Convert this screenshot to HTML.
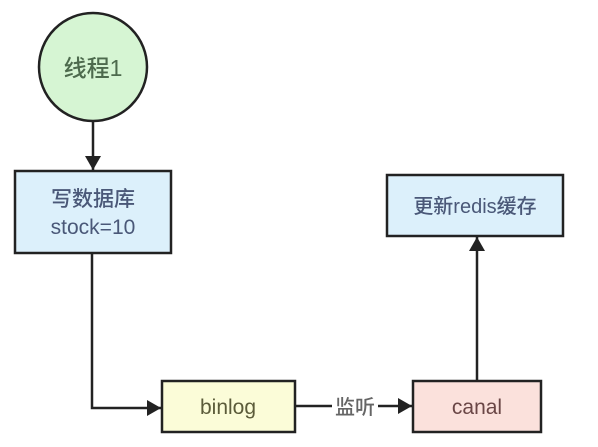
<!DOCTYPE html>
<html><head><meta charset="utf-8"><style>
html,body{margin:0;padding:0;background:#fff;width:598px;height:447px;overflow:hidden}
text{font-family:"Liberation Sans","Noto Sans CJK SC",sans-serif;font-weight:500}
</style></head><body>
<svg width="598" height="447" viewBox="0 0 598 447" xmlns="http://www.w3.org/2000/svg">
<defs>
<marker id="b" markerWidth="14" markerHeight="16" refX="14" refY="8" orient="auto" markerUnits="userSpaceOnUse">
<path d="M0,0 L14,8 L0,16 z" fill="#222"/></marker>
</defs>
<circle cx="93" cy="67" r="54" fill="#d6f5d3" stroke="#222" stroke-width="2.5"/>
<text x="93" y="76" font-size="23" text-anchor="middle" fill="#4d6a4d">线程1</text>
<line x1="93" y1="122" x2="93" y2="170" stroke="#222" stroke-width="2.5" marker-end="url(#b)"/>
<rect x="15" y="171" width="156" height="82" fill="#dcf0fb" stroke="#222" stroke-width="2.5"/>
<text x="93" y="206" font-size="21" text-anchor="middle" fill="#4a5878">写数据库</text>
<text x="93" y="234" font-size="21" text-anchor="middle" fill="#4a5878">stock=10</text>
<polyline points="92,253 92,408 161,408" fill="none" stroke="#222" stroke-width="2.5" marker-end="url(#b)"/>
<rect x="162" y="381" width="133" height="51" fill="#fbfcd8" stroke="#222" stroke-width="2.5"/>
<text x="228" y="414" font-size="21" text-anchor="middle" fill="#5b5b3a">binlog</text>
<line x1="295" y1="406" x2="332" y2="406" stroke="#222" stroke-width="2.5"/>
<text x="355" y="414" font-size="20" text-anchor="middle" fill="#666">监听</text>
<line x1="378" y1="406" x2="412" y2="406" stroke="#222" stroke-width="2.5" marker-end="url(#b)"/>
<rect x="413" y="381" width="128" height="51" fill="#fbe1dc" stroke="#222" stroke-width="2.5"/>
<text x="477" y="414" font-size="21" text-anchor="middle" fill="#6a4646">canal</text>
<line x1="477" y1="381" x2="477" y2="237" stroke="#222" stroke-width="2.5" marker-end="url(#b)"/>
<rect x="387" y="175" width="176" height="61" fill="#dcf0fb" stroke="#222" stroke-width="2.5"/>
<text x="475" y="213" font-size="20" text-anchor="middle" fill="#4a5878">更新redis缓存</text>
</svg>
</body></html>
